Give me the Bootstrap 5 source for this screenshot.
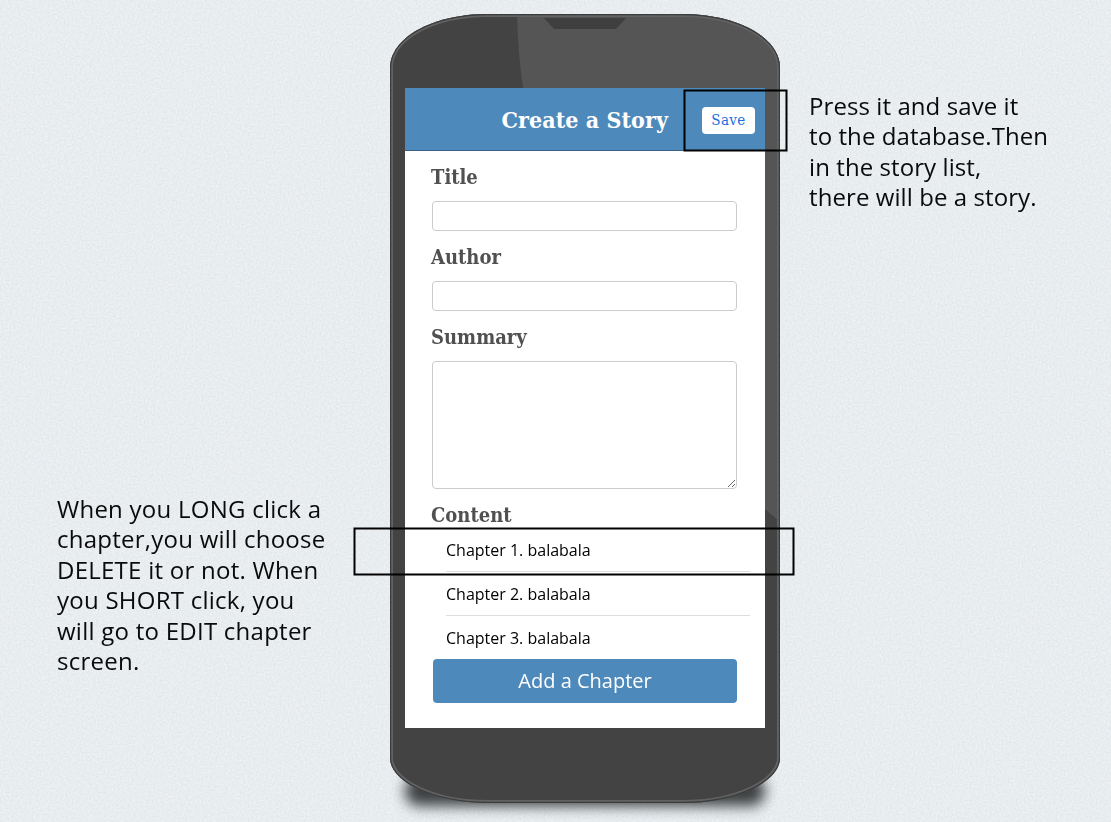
<!DOCTYPE html>
<html lang="en">
<head>
<meta charset="utf-8">
<meta name="viewport" content="width=device-width, initial-scale=1">
<title>Create a Story</title>
<link rel="stylesheet" href="https://cdn.jsdelivr.net/npm/bootstrap@5.3.0/dist/css/bootstrap.min.css">
<style>
  body { background: #e8edf0; height: 822px; overflow: hidden; font-family: "Open Sans", "Noto Sans", sans-serif; color: #000; }
  .grain { z-index: -1; }
  .board { display: grid; grid-template-columns: 390px 390px 1fr; padding-top: 14px; }
  .note { font: 24px/30.4px "Open Sans", "Noto Sans", sans-serif; color: #0a0a0a; white-space: nowrap; letter-spacing: .25px; }
  .note-chapter { margin: 480px 0 0 57px; }
  .note-save { margin: 77px 0 0 29px; letter-spacing: .08px; }
  .phone { height: 789px; padding: 74px 15px 75px; }
  .shell { z-index: 0; overflow: visible; }
  .screen { height: 640px; z-index: 1; }
  .topbar { height: 63px; background: #4d89bb; border-bottom: 1px solid #3b6288; padding-right: 10px; }
  .topbar h1 { font: bold 23px/1 "DejaVu Serif Condensed", "DejaVu Serif", serif; font-stretch: condensed; letter-spacing: .05px; color: #fff; margin: 0 34px 0 0; }
  .btn-save { font: 15px/1 "DejaVu Serif Condensed", "DejaVu Serif", serif; font-stretch: condensed; letter-spacing: .4px; width: 53px; height: 27px; background: #fff; color: #1c6fe0; border-radius: 4px; margin-top: 2px; }
  .field-group { padding: 0 28px 0 27px; }
  .field-label { height: 50px; margin: 0 0 0 -1px; font: bold 20px/53px "DejaVu Serif Condensed", "DejaVu Serif", serif; font-stretch: condensed; color: #505050; }
  .content-label { height: 39px; }
  .form-control { min-height: 0; height: 30px; border: 1px solid #ccc; border-radius: 4px; padding: 4px 8px; }
  textarea.form-control { height: 128px; min-height: 0; display: block; }
  .chapters { margin: 0 -13px 0 14px; height: 131px; }
  .chapters li { height: 44px; line-height: 44px; font-size: 16px; }
  .chapters li:not(:last-child) { border-bottom: 1px solid #ddd; }
  .btn-add { height: 44px; width: 304px; margin-left: 1px; background: #4d89bb; color: #fff; font-size: 20px; line-height: 1; border-radius: 4px; }
  .frame-mark { border: 2px solid #000; z-index: 3; pointer-events: none; transform: translate(-.5px, -.5px); }
  .frame-save { left: 279px; top: 2px; width: 104px; height: 62px; }
  .frame-chapter { left: -92px; top: 0; width: 441px; height: 48px; }
</style>
<script src="https://cdn.jsdelivr.net/npm/bootstrap@5.3.0/dist/js/bootstrap.bundle.min.js"></script>
</head>
<body>
<svg class="grain position-fixed top-0 start-0 w-100 h-100" aria-hidden="true">
  <filter id="paper" x="0" y="0" width="100%" height="100%" color-interpolation-filters="sRGB">
    <feTurbulence type="fractalNoise" baseFrequency=".5" numOctaves="2" seed="4"/>
    <feColorMatrix values=".08 0 0 0 .871  .08 0 0 0 .888  .08 0 0 0 .9  0 0 0 0 1"/>
  </filter>
  <rect width="100%" height="100%" filter="url(#paper)"/>
</svg>
<main class="board">
  <p class="note note-chapter">When you LONG click a<br>chapter,you will choose<br>DELETE it or not. When<br>you SHORT click, you<br>will go to EDIT chapter<br>screen.</p>

  <section class="phone position-relative">
    <svg class="shell position-absolute top-0 start-0" width="390" height="789" viewBox="0 0 390 789" aria-hidden="true">
      <defs>
        <filter id="soft" x="-20%" y="-100%" width="140%" height="300%" color-interpolation-filters="sRGB"><feGaussianBlur stdDeviation="7"/></filter>
        <path id="body-shape" d="M98 0H292C348 0 390 24 390 54V744C390 767 348 789 292 789H98C42 789 0 767 0 744V54C0 24 42 0 98 0Z"/>
        <clipPath id="body-clip"><use href="#body-shape"/></clipPath>
      </defs>
      <rect x="15" y="762" width="360" height="30" rx="14" fill="#3a3e3f" filter="url(#soft)"/>
      <use href="#body-shape" fill="#434343"/>
      <g clip-path="url(#body-clip)">
        <path d="M127 0Q128 40 133 74L375 495L390 508V0Z" fill="#555"/>
        <use href="#body-shape" fill="none" stroke="#626262" stroke-width="6"/>
        <use href="#body-shape" fill="none" stroke="#3b3c3d" stroke-width="2.4"/>
      </g>
      <path d="M154 4H236L226 15H164Z" fill="#3f3f3f"/>
    </svg>

    <div class="screen bg-white position-relative">
      <header class="topbar d-flex align-items-center justify-content-end position-relative">
        <h1>Create a Story</h1>
        <button type="button" class="btn btn-save border-0 p-0">Save</button>
        <div class="frame-mark frame-save position-absolute"></div>
      </header>
      <form class="field-group">
        <label class="field-label d-block" for="title">Title</label>
        <input id="title" class="form-control shadow-none" type="text">
        <label class="field-label d-block" for="author">Author</label>
        <input id="author" class="form-control shadow-none" type="text">
        <label class="field-label d-block" for="summary">Summary</label>
        <textarea id="summary" class="form-control shadow-none"></textarea>
        <div class="field-label content-label">Content</div>
        <ul class="chapters list-unstyled">
          <li class="position-relative">Chapter 1. balabala<div class="frame-mark frame-chapter position-absolute"></div></li>
          <li>Chapter 2. balabala</li>
          <li>Chapter 3. balabala</li>
        </ul>
        <button type="button" class="btn btn-add border-0 p-0">Add a Chapter</button>
      </form>
    </div>
  </section>

  <p class="note note-save">Press it and save it<br>to the database.Then<br>in the story list,<br>there will be a story.</p>
</main>
</body>
</html>
